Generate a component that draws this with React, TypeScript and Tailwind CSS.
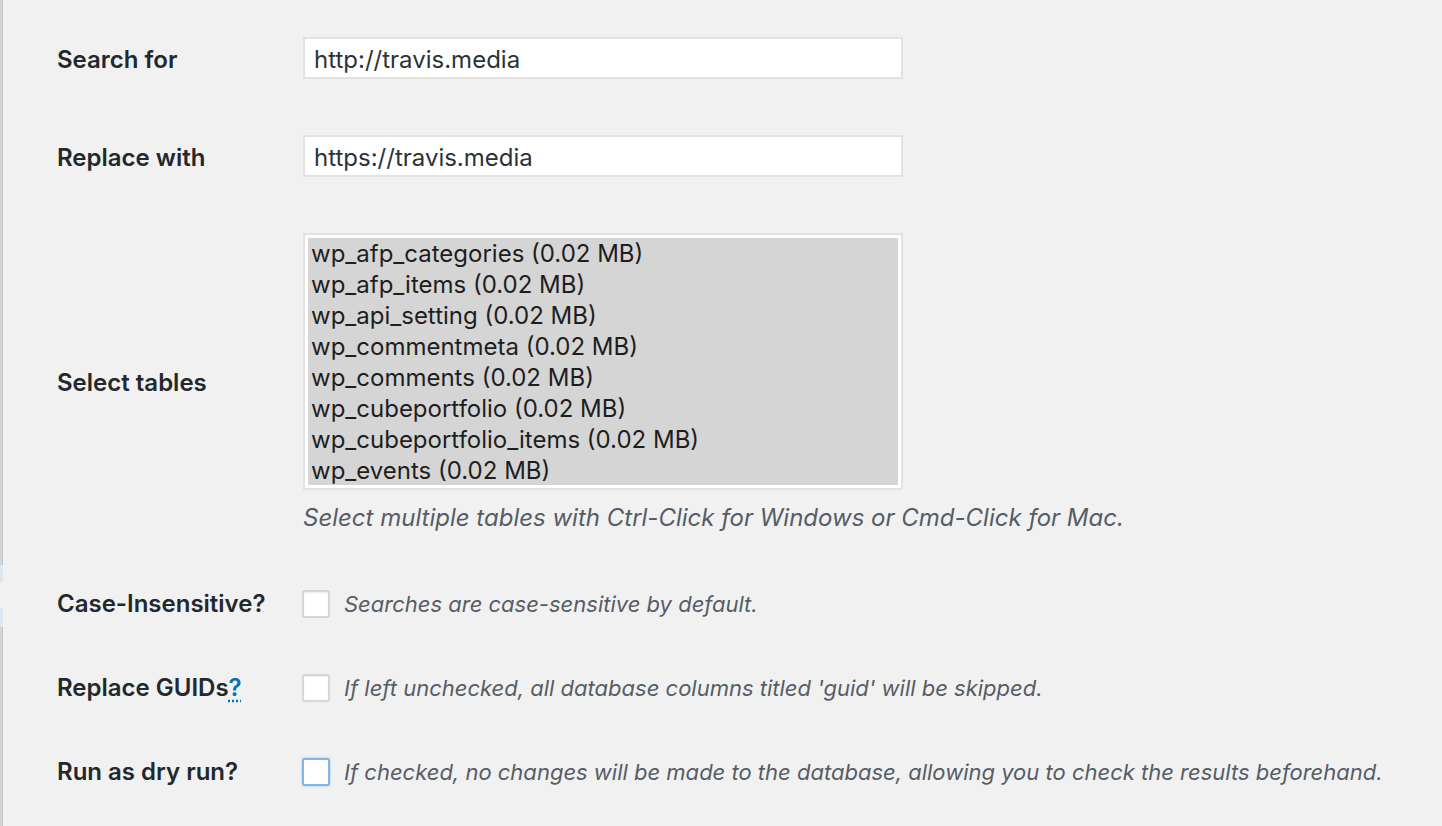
import React from "react";

const tables = [
  "wp_afp_categories (0.02 MB)",
  "wp_afp_items (0.02 MB)",
  "wp_api_setting (0.02 MB)",
  "wp_commentmeta (0.02 MB)",
  "wp_comments (0.02 MB)",
  "wp_cubeportfolio (0.02 MB)",
  "wp_cubeportfolio_items (0.02 MB)",
  "wp_events (0.02 MB)",
];

const font = { fontFamily: "Inter, 'Liberation Sans', sans-serif" };

function Label({ children, shift }: { children: React.ReactNode; shift?: boolean }) {
  return (
    <div
      className={
        shift
          ? "w-[246px] shrink-0 pl-[54px] pt-[3px] text-[24px] font-semibold text-[#23282d] leading-[28px] whitespace-nowrap"
          : "w-[246px] shrink-0 pl-[54px] text-[24px] font-semibold text-[#23282d] leading-[28px] whitespace-nowrap"
      }
    >
      {children}
    </div>
  );
}

function Checkbox({ focused }: { focused?: boolean }) {
  return (
    <div
      className={
        focused
          ? "w-[28px] h-[28px] shrink-0 bg-white border-2 border-[#7eb4e6] rounded-[3px] shadow-[0_0_2px_rgba(30,140,190,0.6)]"
          : "w-[28px] h-[28px] shrink-0 bg-white border-2 border-[#d6d6d6] rounded-[2px] shadow-[inset_0_1px_2px_rgba(0,0,0,0.08)]"
      }
    />
  );
}

export default function App() {
  return (
    <div className="w-[1442px] h-[826px] bg-[#f1f1f1] flex overflow-hidden" style={font}>
      <div className="w-[3px] shrink-0 flex flex-col">
        <div className="h-[565px] bg-[#d4d4d4] border-r border-[#c6c6c6]" />
        <div className="h-[17px] bg-[#dbe6ef]" />
        <div className="h-[26px]" />
        <div className="h-[19px] bg-[#dbe6ef]" />
        <div className="flex-1 bg-[#d4d4d4] border-r border-[#c6c6c6]" />
      </div>
      <div className="flex-1 flex flex-col pt-[37px]">
        <div className="flex items-center h-[42px]">
          <Label shift>Search for</Label>
          <div className="ml-[54px] w-[600px] h-[42px] bg-white border-2 border-[#e2e2e2] flex items-center pl-[9px] pt-[3px] text-[24px] text-[#2c3338] whitespace-nowrap">
            http://travis.media
          </div>
        </div>
        <div className="flex items-center h-[42px] mt-[56px]">
          <Label shift>Replace with</Label>
          <div className="ml-[54px] w-[600px] h-[42px] bg-white border-2 border-[#e2e2e2] flex items-center pl-[9px] pt-[3px] text-[24px] text-[#2c3338] whitespace-nowrap">
            https://travis.media
          </div>
        </div>
        <div className="flex items-center mt-[56px]">
          <Label>Select tables</Label>
          <div className="ml-[54px] flex flex-col">
            <div className="w-[600px] h-[257px] bg-white border-2 border-[#e2e2e2] p-[3px]">
              <div className="w-full h-full bg-[#d5d5d5] pl-[3px] text-[24px] text-[#1e1e1e]">
                {tables.map((t) => (
                  <div key={t} className="h-[31px] leading-[31px] whitespace-nowrap">
                    {t}
                  </div>
                ))}
              </div>
            </div>
            <div className="mt-[14px] h-[28px] leading-[28px] text-[24px] italic text-[#555d66] whitespace-nowrap">
              Select multiple tables with Ctrl-Click for Windows or Cmd-Click for Mac.
            </div>
          </div>
        </div>
        <div className="flex items-center h-[28px] mt-[58px]">
          <Label>Case-Insensitive?</Label>
          <div className="ml-[53px] flex items-center gap-[14px]">
            <Checkbox />
            <span className="text-[22px] italic text-[#555d66] whitespace-nowrap">Searches are case-sensitive by default.</span>
          </div>
        </div>
        <div className="flex items-center h-[28px] mt-[56px]">
          <Label>
            Replace GUIDs
            <span className="text-[#0073aa] underline decoration-dotted underline-offset-4">?</span>
          </Label>
          <div className="ml-[53px] flex items-center gap-[14px]">
            <Checkbox />
            <span className="text-[22px] italic text-[#555d66] whitespace-nowrap">
              If left unchecked, all database columns titled 'guid' will be skipped.
            </span>
          </div>
        </div>
        <div className="flex items-center h-[28px] mt-[56px]">
          <Label>Run as dry run?</Label>
          <div className="ml-[53px] flex items-center gap-[14px]">
            <Checkbox focused />
            <span className="text-[22px] italic text-[#555d66] whitespace-nowrap">
              If checked, no changes will be made to the database, allowing you to check the results beforehand.
            </span>
          </div>
        </div>
      </div>
    </div>
  );
}
